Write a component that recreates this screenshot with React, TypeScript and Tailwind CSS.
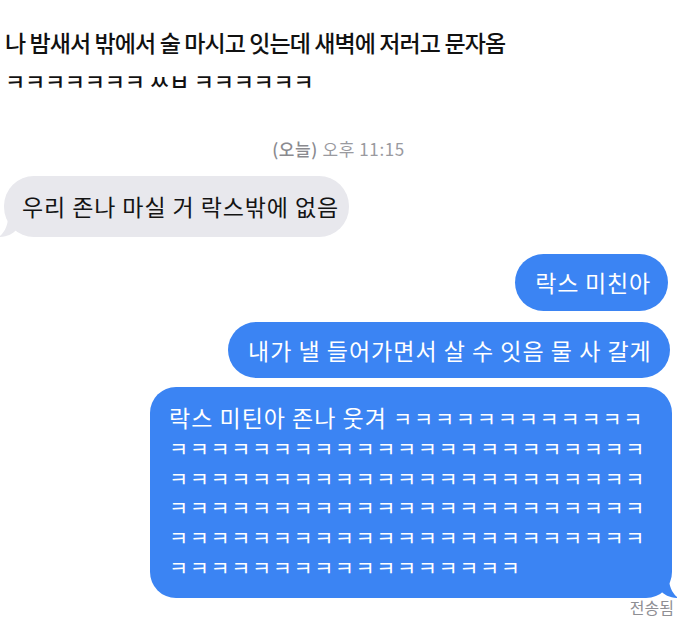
import React from "react";

const K = (n: number) => "ㅋ".repeat(n);

export default function App() {
  const font = { fontFamily: '"Noto Sans CJK KR", "Noto Sans", sans-serif' };
  return (
    <div
      className="w-[677px] h-[620px] overflow-hidden bg-white relative"
      style={font}
    >
      {/* Header */}
      <div className="pl-[5px] pt-[24px] text-[#111] font-medium">
        <div className="text-[23px] leading-[36px] tracking-[-0.9px] whitespace-nowrap">
          나 밤새서 밖에서 술 마시고 잇는데 새벽에 저러고 문자옴
        </div>
        <div className="text-[22px] leading-[26px] tracking-[-0.3px] whitespace-nowrap mt-[7px]">
          {K(7)} ㅆㅂ {K(6)}
        </div>
      </div>

      {/* Timestamp */}
      <div className="mt-[45px] text-center text-[17px] leading-[22px] text-[#9a9a9f] tracking-[0.6px]">
        <span className="font-medium text-[#8a8a8f]">(오늘)</span> 오후 11:15
      </div>

      {/* Received bubble */}
      <div className="mt-[16px] pl-[4px] flex">
        <div className="relative">
          <div className="bg-[#e8e8ed] rounded-[30px] h-[61px] pl-[18px] pr-[10px] flex items-center text-[23px] text-[#141414] tracking-[0.9px] whitespace-nowrap">
            우리 존나 마실 거 락스밖에 없음
          </div>
          <svg
            className="absolute left-[-5px] bottom-0"
            width="20"
            height="20"
            viewBox="0 0 20 20"
          >
            <path d="M9 0 C9 8 6 15 0 20 C8 20 14 17 18 12 L18 0 Z" fill="#e8e8ed" />
          </svg>
        </div>
      </div>

      {/* Sent bubbles */}
      <div className="flex flex-col items-end mt-[17px]">
        <div className="mr-[9px] bg-[#3b84f3] rounded-[30px] h-[57px] pl-[20px] pr-[17px] flex items-center text-[23px] text-white tracking-[0.8px] whitespace-nowrap">
          락스 미친아
        </div>
        <div className="mr-[7px] mt-[11px] bg-[#3b84f3] rounded-[30px] h-[56px] w-[442px] pl-[20px] flex items-center text-[23px] text-white tracking-[1px] whitespace-nowrap">
          내가 낼 들어가면서 살 수 잇음 물 사 갈게
        </div>
        <div className="relative mr-[5px] mt-[9px]">
          <div className="bg-[#3b84f3] rounded-[26px] w-[522px] h-[211px] pl-[19px] pt-[16px] text-white text-[21px] leading-[29.8px] whitespace-nowrap">
            <div>
              <span className="tracking-[1px] text-[23px]">락스 미틴아 존나 웃겨 </span>
              <span className="tracking-[1.8px] text-[20.8px]">{K(12)}</span>
            </div>
            <div className="tracking-[1.6px] text-[20.8px]">{K(23)}</div>
            <div className="tracking-[1.6px] text-[20.8px]">{K(23)}</div>
            <div className="tracking-[1.6px] text-[20.8px]">{K(23)}</div>
            <div className="tracking-[1.6px] text-[20.8px]">{K(23)}</div>
            <div className="tracking-[1.6px] text-[20.8px]">{K(17)}</div>
          </div>
          <svg
            className="absolute right-[-6px] bottom-0"
            width="20"
            height="20"
            viewBox="0 0 20 20"
          >
            <path d="M11 0 C11 8 14 15 20 20 C12 20 6 17 2 12 L2 0 Z" fill="#3b84f3" />
          </svg>
        </div>
        <div className="mt-[1px] mr-[3px] text-[16px] leading-[17px] text-[#8e8e93] whitespace-nowrap">
          전송됨
        </div>
      </div>
    </div>
  );
}
